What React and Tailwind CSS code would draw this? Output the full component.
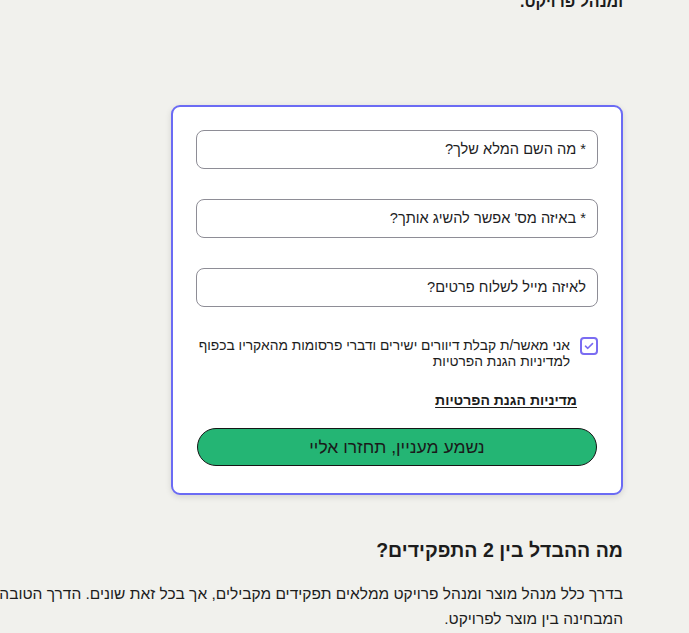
import React from "react";

function Field({label}){
  return (
    <div className="h-[39px] w-full rounded-lg border border-[#8e8d96] bg-white flex items-center px-[11px]">
      <span className="text-[14.6px] text-[#1d1d1f]">{label}</span>
    </div>
  );
}

export default function App(){
  return (
    <div dir="rtl" className="min-h-[633px] w-full overflow-hidden bg-[#f1f1ed] text-[#1c1c1c]" style={{fontFamily:'"Liberation Sans", Arial, sans-serif'}}>
      <div className="w-[820px] mr-[66px]">
        <p className="mt-[-11px] text-[16px] font-bold leading-[25px]">ומנהל פרויקט.</p>

        <div className="mt-[91px] w-[452px] rounded-[9px] border-2 border-[#6b6bf4] bg-white shadow-[0_2px_6px_rgba(0,0,0,0.12)] px-[23px] pt-[23px] pb-[27px] flex flex-col">
          <Field label="* מה השם המלא שלך?" />
          <div className="h-[30px]" />
          <Field label="* באיזה מס' אפשר להשיג אותך?" />
          <div className="h-[30px]" />
          <Field label="לאיזה מייל לשלוח פרטים?" />

          <div className="mt-[30px] flex items-start gap-[10px] pl-[2px]">
            <span className="w-[18px] h-[18px] shrink-0 rounded-[4px] border-2 border-[#7a6cf2] flex items-center justify-center bg-white">
              <svg width="10" height="8" viewBox="0 0 10 8" fill="none">
                <path d="M1.5 4.2 L3.8 6.3 L8.5 1.6" stroke="#7a6cf2" strokeWidth="1.6" strokeLinecap="round" strokeLinejoin="round" />
              </svg>
            </span>
            <p className="text-[13.8px] leading-[16px] mt-[1px] text-[#1c1c1c]">אני מאשר/ת קבלת דיוורים ישירים ודברי פרסומות מהאקריו בכפוף למדיניות הגנת הפרטיות</p>
          </div>

          <a className="mt-[20px] mr-[21px] self-start text-[14px] font-bold underline underline-offset-2 text-[#1c1c1c]">מדיניות הגנת הפרטיות</a>

          <button className="mt-[17px] mx-px h-[38px] rounded-full border border-[#161616] bg-[#24b574] text-[17.5px] text-[#1a1a1a]">נשמע מעניין, תחזרו אליי</button>
        </div>

        <h2 className="mt-[41px] text-[19.5px] font-bold leading-[28px] text-[#1c1c1c]">מה ההבדל בין 2 התפקידים?</h2>
        <p className="mt-[17px] text-[15.5px] leading-[25px] text-[#1c1c1c] whitespace-nowrap">בדרך כלל מנהל מוצר ומנהל פרויקט ממלאים תפקידים מקבילים, אך בכל זאת שונים. הדרך הטובה ביותר להבין את ההבדל<br/>המבחינה בין מוצר לפרויקט.</p>
      </div>
    </div>
  );
}
